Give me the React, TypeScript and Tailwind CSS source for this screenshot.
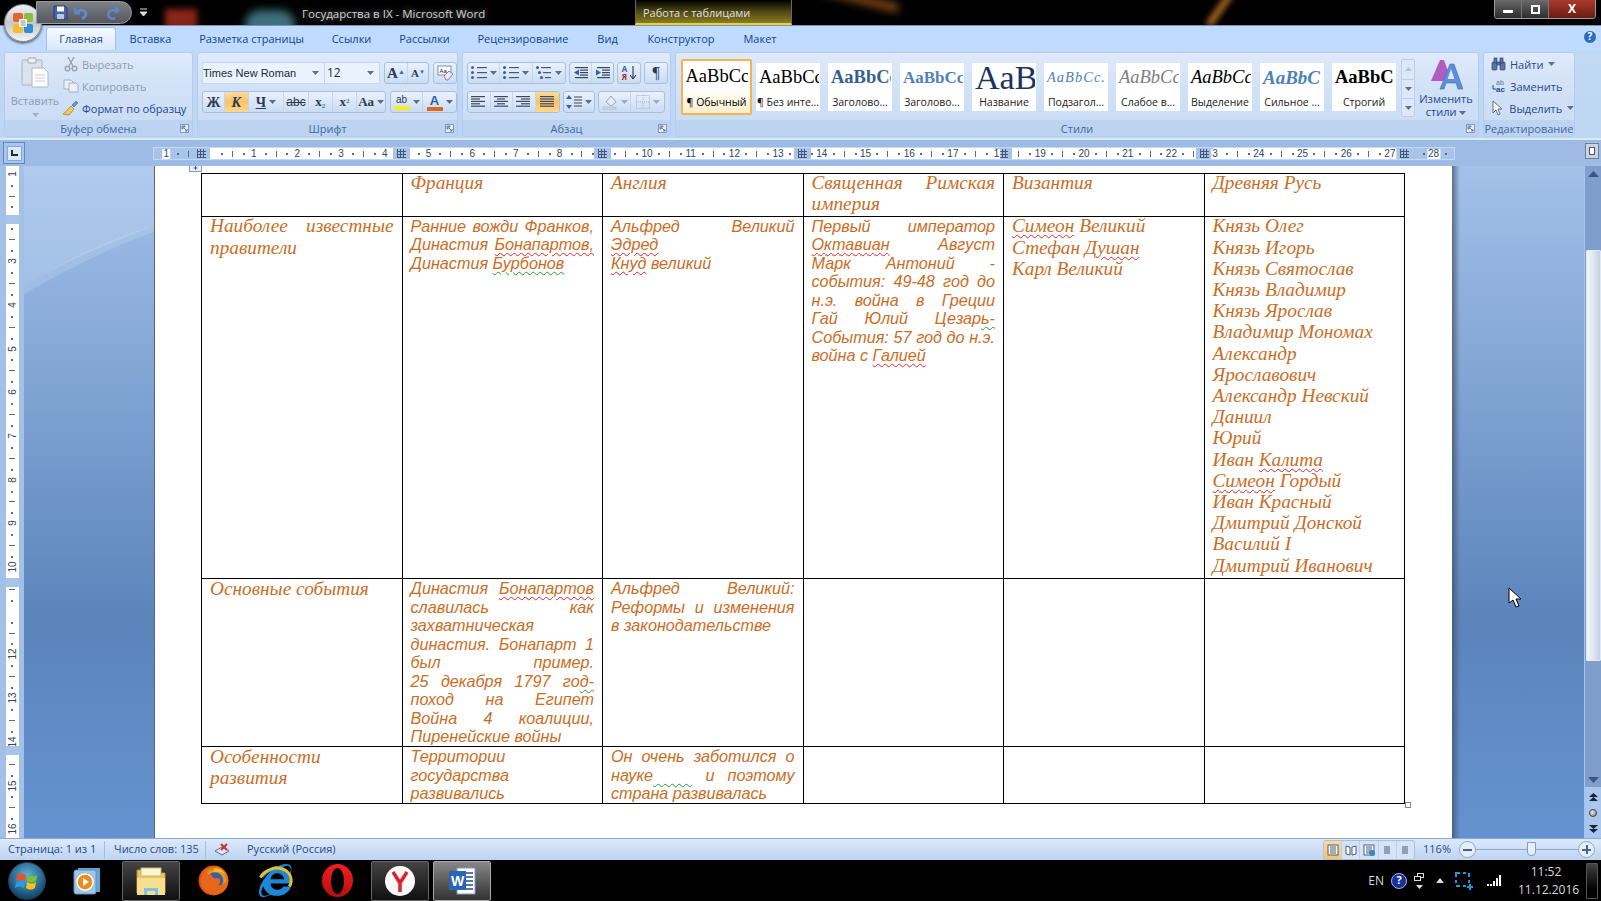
import type { ReactNode } from 'react'
import { FaInternetExplorer } from 'react-icons/fa'

const ui = "font-['Open_Sans','Noto_Sans',sans-serif]"

const tabs: [string, string][] = [
  ['Главная', 'w-[70px]'],
  ['Вставка', 'w-[69px]'],
  ['Разметка страницы', 'w-[133px]'],
  ['Ссылки', 'w-[67px]'],
  ['Рассылки', 'w-[79px]'],
  ['Рецензирование', 'w-[118px]'],
  ['Вид', 'w-[51px]'],
  ['Конструктор', 'w-[96px]'],
  ['Макет', 'w-[62px]'],
]

function Caret({ className = '' }: { className?: string }) {
  return (
    <svg width="7" height="4" viewBox="0 0 7 4" className={className}>
      <path d="M0 0h7L3.5 4z" fill="#5a6f8e" />
    </svg>
  )
}

function Launcher() {
  return (
    <svg width="9" height="9" viewBox="0 0 9 9">
      <rect x=".5" y=".5" width="8" height="8" fill="#e6eef9" stroke="#7f9bc0" />
      <path d="M2 2h3v1H3v2H2zM4 4l3 3M7 5v2H5" stroke="#44638f" fill="none" strokeWidth=".8" />
    </svg>
  )
}

function Group({ w, label, children }: { w: string; label: string; children: ReactNode }) {
  return (
    <div className={`${w} h-[85px] shrink-0 flex flex-col rounded-[3px] border border-[#b3cdee] bg-gradient-to-b from-[#dfeafb] via-[#d0e0f6] to-[#c8dbf5] overflow-hidden`}>
      <div className="h-[67px] flex-none">{children}</div>
      <div className="h-[17px] bg-[#bcd3f1] flex items-center relative">
        <span className="flex-1 text-center text-[11px] text-[#41699f] leading-none">{label}</span>
        <span className="absolute right-[3px] top-[4px]">
          {label !== 'Редактирование' && <Launcher />}
        </span>
      </div>
    </div>
  )
}

function Box({ w, children }: { w: string; children: ReactNode }) {
  return (
    <div className={`${w} h-[22px] flex items-center rounded-[3px] border border-[#a7c0de] bg-gradient-to-b from-[#e9f1fc] via-[#dae7f8] to-[#c9dcf4] divide-x divide-[#c4d6ec]`}>
      {children}
    </div>
  )
}

function Btn({ w, on, children }: { w: string; on?: boolean; children: ReactNode }) {
  return (
    <div className={`${w} h-full flex items-center justify-center gap-[3px] ${on ? 'bg-gradient-to-b from-[#fcdca0] via-[#fbc266] to-[#fcd98f]' : ''}`}>
      {children}
    </div>
  )
}

function Lines({ rows, color = '#3b4a5f' }: { rows: [number, number][]; color?: string }) {
  return (
    <svg width="15" height="13" viewBox="0 0 15 13">
      {rows.map(([x, w], i) => (
        <rect key={i} x={x} y={i * 2.4} width={w} height="1.2" fill={color} />
      ))}
    </svg>
  )
}

function ListIcon({ kind }: { kind: 'b' | 'n' | 'm' }) {
  const mark = kind === 'b' ? '#44629a' : '#2f5ea8'
  return (
    <svg width="16" height="14" viewBox="0 0 16 14">
      {[1, 6, 11].map((y, i) => (
        <g key={y}>
          <rect x={kind === 'm' ? i * 2 : 0} y={y - 1} width="3" height="3" rx="1.5" fill={mark} />
          <rect x={kind === 'm' ? i * 2 + 5 : 6} y={y} width={kind === 'm' ? 10 - i * 2 : 10} height="1.2" fill="#4b5a70" />
        </g>
      ))}
    </svg>
  )
}

function IndentIcon({ dir }: { dir: 'l' | 'r' }) {
  return (
    <svg width="16" height="14" viewBox="0 0 16 14">
      {[1, 3.5, 6, 8.5, 11].map(y => (
        <rect key={y} x={y > 3 && y < 9 ? 7 : 2} y={y} width={y > 3 && y < 9 ? 8 : 13} height="1.2" fill="#3a4658" />
      ))}
      <path d={dir === 'l' ? 'M6 3.5v6L1 6.5z' : 'M1 3.5v6l5-3z'} fill="#2f62b5" />
    </svg>
  )
}

function Mini({ icon, text, muted, caret }: { icon: ReactNode; text: string; muted?: boolean; caret?: boolean }) {
  return (
    <div className="h-[22px] flex items-center gap-[3px]">
      <span className="w-[17px] h-[17px] flex items-center justify-center">{icon}</span>
      <span className={`text-[11px] leading-none ${muted ? 'text-[#8c9cb2]' : 'text-[#1f4a8d]'}`}>{text}</span>
      {caret && <Caret className="ml-[2px]" />}
    </div>
  )
}

function Clipboard() {
  return (
    <Group w="w-[189px]" label="Буфер обмена">
      <div className="flex h-full">
        <div className="w-[60px] -mr-[5px] shrink-0 flex flex-col items-center pt-[4px]">
          <svg width="28" height="32" viewBox="0 0 28 32">
            <rect x="1" y="3" width="20" height="25" rx="1" fill="#dbe2ea" stroke="#aab6c6" />
            <rect x="7" y="1" width="8" height="5" rx="1" fill="#eef1f5" stroke="#9aa7b8" />
            <path d="M11 11h12l4 4v15H11z" fill="#fbfcfd" stroke="#b0bac7" />
            <path d="M14 18h10M14 21h10M14 24h10" stroke="#c8cfd9" />
          </svg>
          <span className="text-[11px] leading-none text-[#8c9cb2] mt-[6px]">Вставить</span>
          <Caret className="mt-[7px] opacity-40" />
        </div>
        <div className="flex flex-col pl-[2px]">
          <Mini
            muted
            text="Вырезать"
            icon={
              <svg width="14" height="16" viewBox="0 0 14 16" fill="none" stroke="#98a4b5" strokeWidth="1.4">
                <path d="M4 1l5 9M10 1L5 10" />
                <circle cx="3.5" cy="12.5" r="2.3" />
                <circle cx="10.5" cy="12.5" r="2.3" />
              </svg>
            }
          />
          <Mini
            muted
            text="Копировать"
            icon={
              <svg width="16" height="14" viewBox="0 0 16 14" fill="#eef2f7" stroke="#a3afbe">
                <path d="M1 1h7l2 2v7H1z" />
                <path d="M6 4h7l2 2v7H6z" />
              </svg>
            }
          />
          <Mini
            text="Формат по образцу"
            icon={
              <svg width="17" height="16" viewBox="0 0 17 16">
                <path d="M9 6l3 3-5 6-6-1c2-1 4-4 8-8z" fill="#f1c85a" stroke="#8a6a1e" strokeWidth=".6" />
                <path d="M10 5l4-4 2 2-4 4z" fill="#6d8fc7" stroke="#3b5a8f" strokeWidth=".5" />
              </svg>
            }
          />
        </div>
      </div>
    </Group>
  )
}

function FontGroup() {
  return (
    <Group w="w-[261px]" label="Шрифт">
      <div className="flex flex-col gap-[7px] pt-[9px] pl-[4px]">
        <div className="flex items-center">
          <div className="w-[123px] h-[22px] bg-[#eaf2fc] border border-[#c5d7ee] flex items-center justify-between pl-0 pr-[2px] text-[11px] text-[#1c2a3d] font-['Liberation_Sans',sans-serif]">
            Times New Roman
            <Caret className="mr-[3px]" />
          </div>
          <div className="w-[55px] h-[22px] bg-[#eaf2fc] border border-[#c5d7ee] border-l-0 flex items-center justify-between px-[2px] text-[12px] text-[#1c2a3d] mr-[4px]">
            12
            <Caret className="mr-[3px]" />
          </div>
          <Box w="w-[45px]">
            <Btn w="w-[24px]"><span className="font-['Liberation_Serif',serif] font-bold text-[15px] text-[#283a55]">A<sup className="text-[7px] text-[#3d6cb3]">▲</sup></span></Btn>
            <Btn w="w-[21px]"><span className="font-['Liberation_Serif',serif] font-bold text-[11px] text-[#283a55]">A<sup className="text-[6px] text-[#3d6cb3]">▼</sup></span></Btn>
          </Box>
          <div className="w-[4px]" />
          <Box w="w-[24px]">
            <Btn w="w-full">
              <svg width="17" height="17" viewBox="0 0 17 17">
                <rect x="1" y="1" width="13" height="9" fill="#fff" stroke="#7b8fac" />
                <text x="2.5" y="8" fontSize="6" fontFamily="Liberation Sans" fill="#223">Aa</text>
                <path d="M7 11l5-5 4 3-5 6H9z" fill="#f2e6f0" stroke="#8a7fa0" />
              </svg>
            </Btn>
          </Box>
        </div>
        <div className="flex items-center font-['Liberation_Serif',serif] text-[#2c3a50]">
          <Box w="w-[184px]">
            <Btn w="w-[22px]"><span className="font-bold text-[14px]">Ж</span></Btn>
            <Btn w="w-[24px]" on><span className="font-bold italic text-[14px]">К</span></Btn>
            <Btn w="w-[36px]"><span className="font-bold underline text-[14px]">Ч</span><Caret /></Btn>
            <Btn w="w-[25px]"><span className="line-through text-[12px] font-['Liberation_Sans',sans-serif]">abc</span></Btn>
            <Btn w="w-[24px]"><span className="font-bold text-[13px]">x<sub className="text-[7px] text-[#3d6cb3]">2</sub></span></Btn>
            <Btn w="w-[25px]"><span className="font-bold text-[13px]">x<sup className="text-[7px] text-[#3d6cb3]">2</sup></span></Btn>
            <Btn w="w-[28px]"><span className="text-[13px] font-semibold">Aa</span><Caret /></Btn>
          </Box>
          <div className="w-[4px]" />
          <Box w="w-[67px]">
            <Btn w="w-[33px]">
              <span className="flex flex-col items-center leading-none">
                <span className="text-[10px] font-['Liberation_Sans',sans-serif]">ab</span>
                <span className="w-[16px] h-[4px] bg-[#f6ee1d] mt-[1px]" />
              </span>
              <Caret />
            </Btn>
            <Btn w="w-[34px]">
              <span className="flex flex-col items-center leading-none">
                <span className="text-[13px] font-bold font-['Liberation_Sans',sans-serif] text-[#2f5da8]">A</span>
                <span className="w-[16px] h-[4px] bg-[#dd6a1a]" />
              </span>
              <Caret />
            </Btn>
          </Box>
        </div>
      </div>
    </Group>
  )
}

function Paragraph() {
  const left: [number, number][] = [[0, 14], [0, 9], [0, 14], [0, 9], [0, 14]]
  const center: [number, number][] = [[0, 14], [3, 8], [0, 14], [3, 8], [0, 14]]
  const right: [number, number][] = [[0, 14], [5, 9], [0, 14], [5, 9], [0, 14]]
  const full: [number, number][] = [[0, 14], [0, 14], [0, 14], [0, 14], [0, 14]]
  return (
    <Group w="w-[209px]" label="Абзац">
      <div className="flex flex-col gap-[7px] pt-[9px] pl-[4px]">
        <div className="flex gap-[3px]">
          <Box w="w-[99px]">
            <Btn w="w-[33px]"><ListIcon kind="b" /><Caret /></Btn>
            <Btn w="w-[33px]"><ListIcon kind="n" /><Caret /></Btn>
            <Btn w="w-[33px]"><ListIcon kind="m" /><Caret /></Btn>
          </Box>
          <Box w="w-[45px]">
            <Btn w="w-[23px]"><IndentIcon dir="l" /></Btn>
            <Btn w="w-[22px]"><IndentIcon dir="r" /></Btn>
          </Box>
          <Box w="w-[24px]">
            <Btn w="w-full">
              <span className="text-[8px] leading-[8px] font-bold text-center">
                <span className="block text-[#2f5da8]">A</span>
                <span className="block text-[#b0282c]">Я</span>
              </span>
              <svg width="6" height="14" viewBox="0 0 6 14"><path d="M3 0v12M0 9l3 4 3-4" stroke="#222" fill="none" /></svg>
            </Btn>
          </Box>
          <Box w="w-[24px]"><Btn w="w-full"><span className="text-[16px] font-['Liberation_Serif',serif] text-[#2a3a52] leading-none">¶</span></Btn></Box>
        </div>
        <div className="flex gap-[3px]">
          <Box w="w-[93px]">
            <Btn w="w-[23px]"><Lines rows={left} /></Btn>
            <Btn w="w-[23px]"><Lines rows={center} /></Btn>
            <Btn w="w-[23px]"><Lines rows={right} /></Btn>
            <Btn w="w-[24px]" on><Lines rows={full} /></Btn>
          </Box>
          <Box w="w-[32px]">
            <Btn w="w-full">
              <svg width="16" height="14" viewBox="0 0 16 14">
                <path d="M3 0l3 4H0zM3 14l3-4H0z" fill="#2f62b5" />
                <path d="M8 2h8M8 5h8M8 8h8M8 11h8" stroke="#3a4658" />
              </svg>
              <Caret />
            </Btn>
          </Box>
          <Box w="w-[67px]">
            <Btn w="w-[33px]">
              <svg width="16" height="15" viewBox="0 0 16 15">
                <path d="M4 7l5-6 5 6-5 4z" fill="#e9edf3" stroke="#9aa7b8" />
                <rect x="1" y="12" width="13" height="3" fill="#c6d4e6" stroke="#a5b4c7" strokeWidth=".5" />
              </svg>
              <Caret className="opacity-50" />
            </Btn>
            <Btn w="w-[34px]">
              <svg width="14" height="14" viewBox="0 0 14 14" fill="none" stroke="#aab6c6" strokeDasharray="1 1">
                <path d="M.5.5h13v13H.5zM7 0v14M0 7h14" />
              </svg>
              <Caret className="opacity-50" />
            </Btn>
          </Box>
        </div>
      </div>
    </Group>
  )
}

const gallery: [string, string, string][] = [
  ['AaBbCc', '¶ Без инте...', 'text-black text-[18.5px]'],
  ['AaBbCc', 'Заголово...', 'text-[#365f91] font-bold text-[18.5px]'],
  ['AaBbCc', 'Заголово...', 'text-[#4f81bd] font-bold text-[17px]'],
  ['AaB', 'Название', 'text-[#17365d] text-[34px] leading-[30px]'],
  ['AaBbCc.', 'Подзагол...', 'text-[#4f81bd] italic text-[14.5px] tracking-[1px]'],
  ['AaBbCc', 'Слабое в...', 'text-[#808080] italic text-[18.5px]'],
  ['AaBbCc', 'Выделение', 'text-black italic text-[18.5px]'],
  ['AaBbC', 'Сильное ...', 'text-[#4f81bd] italic font-bold text-[19px]'],
  ['AaBbC', 'Строгий', 'text-black font-bold text-[18.5px]'],
]

function Styles() {
  return (
    <Group w="w-[804px]" label="Стили">
      <div className="flex pt-[6px] pl-[5px]">
        <div className="w-[71px] h-[56px] mr-[4px] rounded-[2px] border-2 border-[#f1b552] bg-gradient-to-b from-white via-white to-[#fdeec9] flex flex-col items-center overflow-hidden">
          <span className="h-[32px] shrink-0 w-[62px] flex items-center overflow-hidden font-['Liberation_Serif',serif] text-[18.5px] text-black whitespace-nowrap">AaBbCc</span>
          <span className="h-[18px] flex items-center text-[10.5px] leading-none text-black whitespace-nowrap">¶ Обычный</span>
        </div>
        <div className="flex gap-[8px] pt-[4px]">
          {gallery.map(([sample, label, cls], i) => (
            <div key={i} className="w-[64px] h-[48px] bg-white flex flex-col items-center overflow-hidden">
              <span className={`h-[30px] shrink-0 w-[62px] pl-[2px] flex items-center overflow-hidden font-['Liberation_Serif',serif] whitespace-nowrap ${cls}`}>{sample}</span>
              <span className="h-[18px] flex items-center text-[10.5px] leading-none text-[#222] whitespace-nowrap">{label}</span>
            </div>
          ))}
        </div>
        <div className="ml-[5px] w-[14px] h-[58px] flex flex-col rounded-[2px] border border-[#bcd0ea] divide-y divide-[#bcd0ea] bg-[#dce8f8]">
          <span className="h-[20px] flex items-center justify-center"><Caret className="rotate-180 opacity-30" /></span>
          <span className="h-[20px] flex items-center justify-center"><Caret /></span>
          <span className="h-[17px] flex items-center justify-center"><Caret /></span>
        </div>
        <div className="ml-[3px] w-[56px] flex flex-col items-center">
          <svg width="34" height="32" viewBox="0 0 34 32">
            <path d="M2 22L11 1h4l5 14-3 7z" fill="#b05cc0" />
            <path d="M11 30L21 5h4l9 25h-5l-2-6H17l-2 6z" fill="#5c8fd6" stroke="#3f6fb5" strokeWidth=".6" />
            <path d="M18.5 20h7L22 10z" fill="#dbe8f8" />
          </svg>
          <span className="text-[11px] leading-[13px] text-[#1f4a8d] text-center mt-[1px]">Изменить<br />стили <Caret className="inline" /></span>
        </div>
      </div>
    </Group>
  )
}

function Editing() {
  return (
    <Group w="w-[92px]" label="Редактирование">
      <div className="flex flex-col pl-[6px]">
        <Mini
          caret
          text="Найти"
          icon={
            <svg width="15" height="14" viewBox="0 0 15 14" fill="#5876a8" stroke="#2f4468" strokeWidth=".7">
              <rect x="1" y="5" width="5" height="8" rx="1" />
              <rect x="9" y="5" width="5" height="8" rx="1" />
              <rect x="3" y="1" width="3" height="5" />
              <rect x="9" y="1" width="3" height="5" />
              <rect x="6" y="5" width="3" height="3" />
            </svg>
          }
        />
        <Mini
          text="Заменить"
          icon={
            <svg width="15" height="15" viewBox="0 0 15 15">
              <text x="5" y="6" fontSize="7" fontFamily="Liberation Sans" fill="#5a6f8e">ab</text>
              <text x="5" y="13" fontSize="8" fontWeight="bold" fontFamily="Liberation Sans" fill="#1f4a8d">ac</text>
              <path d="M2 6v4h3" stroke="#1f4a8d" fill="none" />
            </svg>
          }
        />
        <Mini
          caret
          text="Выделить"
          icon={
            <svg width="12" height="16" viewBox="0 0 12 16">
              <path d="M1 1v12l3-3 2 5 2-1-2-5h4z" fill="#fff" stroke="#5a6f8e" />
            </svg>
          }
        />
      </div>
    </Group>
  )
}

const hNums: [number, string][] = [
  [-1, '1'], [1, '1'], [2, '2'], [3, '3'], [4, '4'], [5, '5'], [6, '6'], [7, '7'], [8, '8'], [10, '10'], [11, '11'], [12, '12'],
  [13, '13'], [14, '14'], [15, '15'], [16, '16'], [17, '17'], [18, '1'], [19, '19'], [20, '20'], [21, '21'], [22, '22'], [23, '3'],
  [24, '24'], [25, '25'], [26, '26'], [27, '27'], [28, '28'],
]
const hMarks = [201, 401, 602, 802, 1003, 1204, 1404]
const rulerX = (n: number) => 209 + 43.7 * n - 153
const ticks = Array.from({ length: 31 }, (_, i) => i - 1)

function HRuler() {
  return (
    <div className="relative mt-[7px] ml-[153px] w-[1302px] h-[13px] bg-white border border-[#c5d8f1] text-[10px] leading-none text-[#33445e] font-['Liberation_Sans',sans-serif] overflow-hidden">
      <div className="absolute left-0 top-0 w-[48px] h-full bg-[#a9c4e9]" />
      <div className="absolute right-0 top-0 w-[50px] h-full bg-[#a9c4e9]" />
      {ticks.map(n => (
        <span key={n}>
          <span className="absolute top-[5px] w-[2px] h-[2px] bg-[#5a6a80]" style={{ left: rulerX(n + 0.25) }} />
          <span className="absolute top-[3px] w-px h-[6px] bg-[#5a6a80]" style={{ left: rulerX(n + 0.5) }} />
          <span className="absolute top-[5px] w-[2px] h-[2px] bg-[#5a6a80]" style={{ left: rulerX(n + 0.75) }} />
        </span>
      ))}
      {hMarks.map(x => (
        <span key={x} className="absolute top-0 h-full w-[17px] bg-[#a9c4e9] flex items-center justify-center" style={{ left: x - 162 }}>
          <span className="w-[9px] h-[9px] bg-[repeating-linear-gradient(90deg,#44577a_0_1px,transparent_1px_3px),repeating-linear-gradient(0deg,#44577a_0_1px,transparent_1px_3px)]" />
        </span>
      ))}
      {hNums.map(([n, t]) => (
        <span key={n} className="absolute top-[1px] -translate-x-1/2 bg-white px-[1px]" style={{ left: rulerX(n) }}>{t}</span>
      ))}
    </div>
  )
}

const vNums = Array.from({ length: 16 }, (_, i) => i + 1).filter(n => n !== 2 && n !== 11)
const vMarks = [215, 578, 746]
const rulerY = (n: number) => 130 + 43.7 * n - 166

function VRuler() {
  return (
    <div className="relative w-[24px] h-full shrink-0 bg-[#a3c0e7]">
      <div className="absolute left-[6px] top-0 w-[13px] h-full bg-white text-[10px] leading-none text-[#33445e] font-['Liberation_Sans',sans-serif] overflow-hidden">
        {Array.from({ length: 17 }, (_, n) => n).map(n => (
          <span key={n}>
            <span className="absolute left-[5px] w-[2px] h-[2px] bg-[#5a6a80]" style={{ top: rulerY(n + 0.25) }} />
            <span className="absolute left-[3px] w-[6px] h-px bg-[#5a6a80]" style={{ top: rulerY(n + 0.5) }} />
            <span className="absolute left-[5px] w-[2px] h-[2px] bg-[#5a6a80]" style={{ top: rulerY(n + 0.75) }} />
          </span>
        ))}
        {vNums.map(n => (
          <span key={n} className="absolute left-0 w-[13px] text-center -rotate-90 bg-white" style={{ top: rulerY(n) - 5 }}>{n}</span>
        ))}
        {vMarks.map(y => (
          <span key={y} className="absolute left-0 w-full h-[9px] bg-[#a9c4e9]" style={{ top: y - 166 }} />
        ))}
      </div>
    </div>
  )
}

const times = "font-['Liberation_Serif',serif] text-[19.3px] leading-[21.2px]"
const arial = "font-['Liberation_Sans',sans-serif] text-[16.2px] leading-[18.5px]"

function L({ j, children }: { j?: boolean; children: ReactNode }) {
  return <div className={j ? '[text-align-last:justify]' : ''}>{children}</div>
}
function R({ children }: { children: ReactNode }) {
  return <span className="underline decoration-wavy decoration-[#e0262b] decoration-1 underline-offset-[2px]">{children}</span>
}
function G({ children }: { children: ReactNode }) {
  return <span className="underline decoration-wavy decoration-[#2c9a3a] decoration-1 underline-offset-[2px]">{children}</span>
}
function Cell({ font, children }: { font: string; children?: ReactNode }) {
  return (
    <td className={`border border-black align-top px-[8px] py-0 ${font}`}>
      <div className={font === times ? 'relative -top-[1.5px]' : ''}>{children}</div>
    </td>
  )
}

function DocTable() {
  return (
    <table className="table-fixed border-collapse w-[1204px] ml-[46px] text-[#cb6d1f] italic">
      <tbody>
        <tr className="h-[43px]">
          <Cell font={times} />
          <Cell font={times}>Франция</Cell>
          <Cell font={times}>Англия</Cell>
          <Cell font={times}><L j>Священная Римская</L><L>империя</L></Cell>
          <Cell font={times}>Византия</Cell>
          <Cell font={times}>Древняя Русь</Cell>
        </tr>
        <tr className="h-[362.5px]">
          <Cell font={times}><L j>Наиболее известные</L><L>правители</L></Cell>
          <Cell font={arial}>
            <L j>Ранние вожди Франков,</L>
            <L j>Династия <R>Бонапартов,</R></L>
            <L>Династия <G>Бурбонов</G></L>
          </Cell>
          <Cell font={arial}>
            <L j>Альфред Великий</L>
            <L><R>Эдред</R></L>
            <L><R>Кнуд</R> великий</L>
          </Cell>
          <Cell font={arial}>
            <L j>Первый император</L>
            <L j><R>Октавиан</R> Август</L>
            <L j>Марк Антоний -</L>
            <L j>события: 49-48 год до</L>
            <L j>н.э. война в Греции</L>
            <L j>Гай Юлий Цезар<G>ь-</G></L>
            <L j>События: 57 год до н.э.</L>
            <L>война с <R>Галией</R></L>
          </Cell>
          <Cell font={times}>
            <L><R>Симеон</R> Великий</L>
            <L>Стефан <R>Душан</R></L>
            <L>Карл Великий</L>
          </Cell>
          <Cell font={times}>
            <L>Князь Олег</L>
            <L>Князь Игорь</L>
            <L>Князь Святослав</L>
            <L>Князь Владимир</L>
            <L>Князь Ярослав</L>
            <L>Владимир Мономах</L>
            <L>Александр</L>
            <L>Ярославович</L>
            <L>Александр Невский</L>
            <L>Даниил</L>
            <L>Юрий</L>
            <L>Иван <R>Калита</R></L>
            <L><R>Симеон</R> Гордый</L>
            <L>Иван Красный</L>
            <L>Дмитрий Донской</L>
            <L>Василий I</L>
            <L>Дмитрий Иванович</L>
          </Cell>
        </tr>
        <tr className="h-[168px]">
          <Cell font={times}>Основные события</Cell>
          <Cell font={arial}>
            <L j>Династия <R>Бонапартов</R></L>
            <L j>славилась как</L>
            <L>захватническая</L>
            <L j>династия. Бонапарт 1</L>
            <L j>был пример.</L>
            <L j>25 декабря 1797 го<G>д-</G></L>
            <L j>поход на Египет</L>
            <L j>Война 4 коалиции,</L>
            <L>Пиренейские войны</L>
          </Cell>
          <Cell font={arial}>
            <L j>Альфред Великий:</L>
            <L j>Реформы и изменения</L>
            <L>в законодательстве</L>
          </Cell>
          <Cell font={times} />
          <Cell font={times} />
          <Cell font={times} />
        </tr>
        <tr className="h-[56px]">
          <Cell font={times}><L>Особенности</L><L>развития</L></Cell>
          <Cell font={arial}>
            <L>Территории</L>
            <L>государства</L>
            <L>развивались</L>
          </Cell>
          <Cell font={arial}>
            <L j>Он очень заботился о</L>
            <L j>науке<G>{'\u00a0\u00a0\u00a0'}</G> и поэтому</L>
            <L>страна развивалась</L>
          </Cell>
          <Cell font={times} />
          <Cell font={times} />
          <Cell font={times} />
        </tr>
      </tbody>
    </table>
  )
}

function Scrollbar() {
  return (
    <div className="w-[17px] shrink-0 h-full flex flex-col items-center bg-[#7f9ecb] border-l border-[#a9c4e9]">
      <div className="h-[16px] w-full flex items-center justify-center bg-[#7f9ecb]">
        <svg width="11" height="7" viewBox="0 0 11 7"><path d="M0 6h11L5.5 0z" fill="#3d5585" /></svg>
      </div>
      <div className="h-[68px]" />
      <div className="h-[411px] w-[15px] shrink-0 rounded-[1px] border border-[#dfe9f6] bg-gradient-to-r from-[#f1f5fb] via-[#dfe7f2] to-[#c3d0e2]" />
      <div className="flex-1" />
      <div className="h-[16px] w-full flex items-center justify-center">
        <svg width="11" height="7" viewBox="0 0 11 7"><path d="M0 1h11L5.5 7z" fill="#3d5585" /></svg>
      </div>
      <div className="h-[51px] w-full bg-[#a9c6ee] flex flex-col items-center justify-around py-[2px]">
        <svg width="9" height="9" viewBox="0 0 9 9"><path d="M0 4h9L4.5 0zM0 8h9L4.5 4z" fill="#1b2438" /></svg>
        <span className="w-[8px] h-[8px] rounded-full bg-[radial-gradient(circle_at_35%_35%,#eee,#777)] border border-[#444]" />
        <svg width="9" height="9" viewBox="0 0 9 9"><path d="M0 1h9L4.5 5zM0 5h9L4.5 9z" fill="#1b2438" /></svg>
      </div>
    </div>
  )
}

function StatusBar() {
  return (
    <div className={`h-[22px] flex items-center justify-between border-t border-[#8eabd3] bg-gradient-to-b from-[#dce9fb] to-[#bed4f0] text-[11px] text-[#1f4a8d] whitespace-nowrap ${ui}`}>
      <div className="flex h-full items-center divide-x divide-[#a4bedf]">
        <span className="w-[105px] pl-[8px]">Страница: 1 из 1</span>
        <span className="w-[101px] pl-[9px]">Число слов: 135</span>
        <span className="w-[148px] flex items-center pl-[8px] gap-[17px] h-full">
          <svg width="16" height="14" viewBox="0 0 16 14">
            <path d="M1 8l7-4 7 4-7 4z" fill="#dfeaf7" stroke="#4d6c9d" />
            <path d="M7 1l6 6M13 1L7 7" stroke="#d92d20" strokeWidth="2" />
          </svg>
          Русский (Россия)
        </span>
      </div>
      <div className="flex items-center h-full">
        <div className="w-[92px] h-[20px] flex items-center rounded-[3px] border border-[#a7c0de] bg-[#d4e3f7] divide-x divide-[#bcd0ea] overflow-hidden">
          {['a', 'b', 'c', 'd', 'e'].map(k => (
            <span key={k} className={`flex-1 h-full flex items-center justify-center ${k === 'a' ? 'bg-gradient-to-b from-[#fcdca0] to-[#fbc266]' : ''}`}>
              <svg width="12" height="12" viewBox="0 0 12 12">
                {k === 'b' ? (
                  <path d="M1 2l4 1v8l-4-1zM11 2L7 3v8l4-1z" fill="#fff" stroke="#4d5d74" />
                ) : (
                  <>
                    <rect x="1" y="1" width="10" height="10" fill={k === 'a' || k === 'c' ? '#fff' : 'none'} stroke={k === 'a' || k === 'c' ? '#4d5d74' : 'none'} />
                    <path d="M3 3h6M3 5h6M3 7h6M3 9h6" stroke="#4d5d74" />
                    {k === 'c' && <circle cx="9" cy="9" r="3" fill="#2e8cc4" />}
                  </>
                )}
              </svg>
            </span>
          ))}
        </div>
        <span className="w-[44px] text-center text-[#1f4a8d]">116%</span>
        <span className="w-[17px] h-[17px] rounded-full border border-[#8da7c9] bg-[#e6eefa] flex items-center justify-center"><span className="w-[9px] h-[2px] bg-[#47638f]" /></span>
        <div className="relative w-[102px] h-px bg-[#8da7c9]">
          <span className="absolute left-[51px] -top-[7px] w-[9px] h-[14px] bg-[#e6eefa] border border-[#7f9bc0] rounded-b-[4px]" />
        </div>
        <span className="relative w-[17px] h-[17px] rounded-full border border-[#8da7c9] bg-[#e6eefa] flex items-center justify-center mr-[6px]">
          <span className="w-[9px] h-[2px] bg-[#47638f]" />
          <span className="absolute w-[2px] h-[9px] bg-[#47638f]" />
        </span>
      </div>
    </div>
  )
}

function Pinned({ box, active, children }: { box?: boolean; active?: boolean; children: ReactNode }) {
  return (
    <div className={`w-[58px] h-[40px] flex items-center justify-center mr-[4px] rounded-[2px] ${box ? 'border border-[#666] bg-gradient-to-b from-[#444] to-[#111]' : ''} ${active ? 'bg-gradient-to-b from-[#888] to-[#333] border-[#aaa]' : ''}`}>
      {children}
    </div>
  )
}

function Taskbar() {
  return (
    <div className={`h-[41px] bg-black flex items-center justify-between ${ui}`}>
      <div className="flex items-center">
        <div className="w-[46px] ml-[8px] mr-[3px] h-[40px] flex items-center">
          <svg width="38" height="38" viewBox="0 0 38 38">
            <defs>
              <radialGradient id="orb" cx="50%" cy="35%" r="65%">
                <stop offset="0" stopColor="#5fb2dd" />
                <stop offset="1" stopColor="#0c3d63" />
              </radialGradient>
            </defs>
            <circle cx="19" cy="19" r="18.5" fill="url(#orb)" stroke="#283d50" />
            <path d="M9 13c3-2 6-2 9 0l-1 6c-3-2-6-2-9 0z" fill="#e8542a" />
            <path d="M20 13c3 2 6 2 9 0l-1 6c-3 2-6 2-9 0z" fill="#7cc22c" />
            <path d="M8 20c3-2 6-2 9 0l-1 6c-3-2-6-2-9 0z" fill="#2f9ae0" />
            <path d="M19 20c3 2 6 2 9 0l-1 6c-3 2-6 2-9 0z" fill="#f6c21c" />
          </svg>
        </div>
        <div className="w-[60px] flex items-center justify-center mr-[5px]">
          <svg width="28" height="28" viewBox="0 0 28 28">
            <rect x="5" y="1" width="22" height="24" fill="#6aa2cc" />
            <rect x="1" y="3" width="22" height="24" rx="2" fill="#9fc7e3" stroke="#5c93bf" />
            <circle cx="12" cy="15" r="8" fill="#f08a1a" stroke="#fff" strokeWidth="1.5" />
            <path d="M10 11l6 4-6 4z" fill="#fff" />
          </svg>
        </div>
        <Pinned box>
          <svg width="32" height="30" viewBox="0 0 32 30">
            <path d="M2 4h10l2 3h16v20H2z" fill="#e9c862" stroke="#b7953a" />
            <rect x="6" y="2" width="20" height="8" fill="#fdf6d6" stroke="#cbb26a" />
            <rect x="2" y="12" width="28" height="17" fill="#f7df8d" />
            <path d="M9 22h14v7h-3v-4h-8v4H9z" fill="#7fc1e8" />
          </svg>
        </Pinned>
        <div className="w-[58px] flex justify-center mr-[4px]">
          <svg width="31" height="31" viewBox="0 0 31 31">
            <defs>
              <radialGradient id="ff" cx="55%" cy="50%" r="55%">
                <stop offset="0.45" stopColor="#3a5ea8" />
                <stop offset="0.55" stopColor="#f0a020" />
                <stop offset="1" stopColor="#db3d10" />
              </radialGradient>
            </defs>
            <circle cx="15.5" cy="15.5" r="15" fill="url(#ff)" />
            <path d="M7 4c-5 8-4 20 8 25 8 1 14-6 14-14-2 4-6 6-9 5 3-1 3-6 0-7-3 1-6 0-6-3-3 0-6-2-7-6z" fill="#e8661a" />
            <path d="M16 3c5 0 9 2 12 7-3-3-7-4-12-3z" fill="#f6c21c" />
          </svg>
        </div>
        <div className="w-[58px] flex justify-center mr-[4px] relative">
          <FaInternetExplorer className="text-[#1e88d8] w-[33px] h-[33px]" />
          <span className="absolute left-[11px] top-[3px] w-[36px] h-[30px] rounded-[50%] border-[3px] border-transparent border-t-[#e8c12a] border-r-[#e8c12a] -rotate-[20deg]" />
        </div>
        <div className="w-[58px] flex justify-center mr-[5px]">
          <span className="w-[31px] h-[33px] rounded-[50%] bg-gradient-to-b from-[#f0201f] to-[#b80d10] flex items-center justify-center">
            <span className="w-[13px] h-[26px] rounded-[50%] bg-black" />
          </span>
        </div>
        <Pinned box>
          <svg width="30" height="30" viewBox="0 0 30 30">
            <circle cx="15" cy="15" r="15" fill="#fff" />
            <path d="M8 6l7 11 7-11M15 16v10" stroke="#e31e24" strokeWidth="3.5" fill="none" />
          </svg>
        </Pinned>
        <Pinned box active>
          <svg width="32" height="32" viewBox="0 0 32 32">
            <rect x="11" y="3" width="18" height="26" fill="#fff" stroke="#7d99c2" />
            <path d="M20 8h7M20 12h7M20 16h7M14 20h13M14 24h13" stroke="#1f4e93" strokeWidth="1.5" />
            <rect x="3" y="6" width="17" height="19" fill="#2a64b4" />
            <text x="5" y="21" fontSize="14" fontWeight="bold" fontFamily="Liberation Sans" fill="#fff">W</text>
          </svg>
        </Pinned>
      </div>
      <div className="flex items-center text-[#d9d9d9]">
        <span className="text-[12px] mr-[7px]">EN</span>
        <span className="w-[16px] h-[16px] rounded-full bg-[#1a2f9a] border border-[#9fb5ea] text-white text-[11px] font-bold flex items-center justify-center mr-[5px]">?</span>
        <span className="w-[14px] flex flex-col items-center gap-[4px] mr-[10px]">
          <svg width="10" height="8" viewBox="0 0 10 8" fill="none" stroke="#ddd"><rect x="3.5" y=".5" width="6" height="4" /><rect x=".5" y="3.5" width="6" height="4" fill="#000" /></svg>
          <svg width="7" height="4" viewBox="0 0 7 4"><path d="M0 0h7L3.5 4z" fill="#ddd" /></svg>
        </span>
        <svg width="8" height="5" viewBox="0 0 8 5" className="mr-[11px]"><path d="M0 5h8L4 0z" fill="#ddd" /></svg>
        <svg width="18" height="18" viewBox="0 0 18 18" className="mr-[14px]" fill="none" stroke="#1e9ad6" strokeWidth="2">
          <path d="M1 5V1h4M8 1h3M14 1v4M14 8v3M1 8v3M1 14h4M8 14h3" />
          <path d="M15 12v6M12 15h6" />
        </svg>
        <span className="flex items-end gap-[1px] h-[11px] mr-[17px]">
          <span className="w-[2px] h-[2px] bg-white" />
          <span className="w-[2px] h-[2px] bg-white" />
          <span className="w-[2px] h-[5px] bg-white" />
          <span className="w-[2px] h-[8px] bg-white" />
          <span className="w-[2px] h-[11px] bg-white" />
        </span>
        <span className="text-[12px] leading-[18px] text-center w-[56px] mr-[12px] whitespace-nowrap">11:52<br />11.12.2016</span>
        <span className="w-[12px] h-[36px] border border-[#555] bg-gradient-to-b from-[#444] to-black rounded-[1px] mr-[3px]" />
      </div>
    </div>
  )
}

export default function App() {
  return (
    <div className={`relative w-[1601px] h-[901px] overflow-hidden flex flex-col bg-black ${ui}`}>
      {/* title bar */}
      <div className="relative h-[25px] shrink-0 flex items-center bg-black overflow-hidden">
        <div className="absolute left-[165px] top-[9px] w-[32px] h-[20px] bg-[#8a2418] blur-[3px]" />
        <div className="absolute left-[245px] top-[10px] w-[50px] h-[30px] rounded-full bg-[#3d6f7c] blur-[4px]" />
        <div className="absolute left-[780px] -top-[10px] w-[120px] h-[8px] rotate-[14deg] bg-[#8a4a18] blur-[4px]" />
        <div className="absolute left-[1200px] top-[6px] w-[40px] h-[6px] -rotate-[55deg] bg-[#c47a28] blur-[3px]" />
        <div className="ml-[36px] w-[96px] h-[23px] rounded-r-full bg-gradient-to-b from-[#7d8084] to-[#54575b] border border-[#9a9da1] flex items-center z-10 pl-[16px] gap-[5px]">
          <svg width="15" height="15" viewBox="0 0 15 15">
            <path d="M1 1h11l2 2v11H1z" fill="#4466ad" stroke="#223d78" />
            <rect x="4" y="1.5" width="7" height="5" fill="#fff" />
            <rect x="4" y="9" width="7" height="5" fill="#b9c4da" />
          </svg>
          <svg width="16" height="14" viewBox="0 0 16 14" fill="none" stroke="#5b87d4" strokeWidth="2.6"><path d="M2 2v5h5M3 7c2-4 9-4 10 1 0 2-2 4-4 5" /></svg>
          <Caret className="opacity-70" />
          <svg width="15" height="14" viewBox="0 0 16 14" fill="none" stroke="#5b87d4" strokeWidth="2.6"><path d="M10 1l3 3-3 3M13 4H7a4.500 4.500 0 100 9h3" /></svg>
        </div>
        <svg width="9" height="9" viewBox="0 0 9 9" className="ml-[7px] z-10"><path d="M1 1h7M1 4h7L4.500 8z" stroke="#ddd" fill="#ddd" /></svg>
        <div className="ml-[154px] w-[187px] mt-[3px] z-10 text-[11.5px] leading-none text-[#cfcfcf] whitespace-nowrap [text-shadow:0_0_6px_#888]">Государства в IX - Microsoft Word</div>
        <div className="ml-[146px] w-[157px] h-[25px] z-10 bg-gradient-to-b from-transparent via-[#4d4716] to-[#8c7e20] border-x border-[#6d6a4a] border-b-2 border-b-[#e8d040] flex items-center pl-[7px] pt-[4px] text-[11px] text-[#e0e0e0] whitespace-nowrap">Работа с таблицами</div>
        <div className="flex-1" />
        <div className="flex h-[19px] self-start mr-[5px] w-[102px] rounded-b-[4px] border border-t-0 border-[#9a9a9a] overflow-hidden z-10">
          <span className="w-[26px] flex items-center justify-center bg-gradient-to-b from-[#6a6a6a] to-[#2d2d2d]"><span className="w-[10px] h-[3px] bg-white mt-[4px]" /></span>
          <span className="w-[28px] flex items-center justify-center bg-gradient-to-b from-[#6a6a6a] to-[#2d2d2d] border-x border-[#777]"><span className="w-[9px] h-[9px] border-2 border-white" /></span>
          <span className="flex-1 flex items-center justify-center bg-gradient-to-b from-[#a83a2c] to-[#6b1c12] text-white text-[12px] font-bold">X</span>
        </div>
      </div>

      {/* tabs */}
      <div className="h-[25px] shrink-0 flex items-end bg-[#bfdbff] pl-[46px] border-t border-[#7d93b0] text-[11px] text-[#15428b]">
        {tabs.map(([t, w], i) => (
          <div
            key={t}
            className={`${w} h-[23px] pt-[1px] flex items-center justify-center whitespace-nowrap ${i === 0 ? 'rounded-t-[3px] border border-b-0 border-[#a5c2e6] bg-gradient-to-b from-[#f6faff] to-[#d9e7fa]' : ''}`}
          >
            {t}
          </div>
        ))}
        <div className="flex-1 self-center flex justify-end pr-[4px] mb-[3px]">
          <span className="w-[14px] h-[14px] rounded-full bg-[#2a6ec4] border border-[#cfe0f5] text-white text-[10px] font-bold flex items-center justify-center">?</span>
        </div>
      </div>

      {/* ribbon */}
      <div className="h-[90px] shrink-0 flex gap-[4px] pl-[4px] pt-[2px] bg-gradient-to-b from-[#c2d9f6] to-[#bfd6f3] border-b-2 border-[#dbe8f8]">
        <Clipboard />
        <FontGroup />
        <Paragraph />
        <Styles />
        <Editing />
      </div>

      {/* horizontal ruler */}
      <div className="relative h-[26px] shrink-0 bg-[#9dbbe4]">
        <HRuler />
        <div className="absolute left-[3px] top-[2px] w-[22px] h-[22px] border border-[#5f86c4] bg-[#a9c6ee] flex items-center justify-center">
          <span className="w-[15px] h-[15px] bg-[#dfe9f6] border border-[#8da7c9] flex items-center justify-center">
            <span className="w-[7px] h-[6px] border-l-2 border-b-2 border-[#1d2b40]" />
          </span>
        </div>
        <div className="absolute right-[2px] top-[3px] w-[14px] h-[16px] bg-[#c9d4e4] border border-[#6e7f98] flex items-center justify-center">
          <span className="w-[6px] h-[8px] bg-white border border-[#555]" />
        </div>
      </div>

      {/* document */}
      <div className="relative h-[672px] shrink-0 flex bg-gradient-to-b from-[#a3c1e9] via-[#5b84bb] via-[68%] to-[#6592d0]">
        <VRuler />
        <div className="relative w-[130px] shrink-0 overflow-hidden">
          <svg className="absolute inset-0 w-full h-full" viewBox="0 0 130 672" preserveAspectRatio="none">
            <path d="M0 0h130v60C90 75 40 95 0 120z" fill="#c6dcf6" opacity=".35" />
            <path d="M0 120c40-25 90-50 130-60v6C90 80 40 105 0 128z" fill="#dceafb" opacity=".2" />
          </svg>
        </div>
        <div className="relative w-[1298px] shrink-0 bg-white border-l border-[#5b6675] overflow-hidden pt-[6.500px]">
          <DocTable />
          <svg className="absolute left-[34px] top-0" width="13" height="6" viewBox="0 0 13 6">
            <rect x=".5" y="-1" width="12" height="6.500" fill="#eef2f8" stroke="#8f9db3" />
            <path d="M6.500 0v4M4.500 2h4" stroke="#3d5fa8" />
          </svg>
          <div className="absolute left-[1250px] top-[636px] w-[6px] h-[6px] bg-white border border-[#888]" />
        </div>
        <div className="w-[8px] shrink-0 bg-gradient-to-r from-[#3e4d63]/70 to-transparent" />
        <div className="flex-1" />
        <Scrollbar />
      </div>

      <StatusBar />
      <Taskbar />

      {/* office button */}
      <div className="absolute left-[4px] top-[4px] w-[38px] h-[38px] rounded-full border border-[#8a8d92] bg-gradient-to-b from-[#eef0f3] via-[#c3c8ce] to-[#f2f4f7] flex items-center justify-center shadow-[0_1px_3px_#333]">
        <svg width="24" height="24" viewBox="0 0 24 24">
          <rect x="2" y="2" width="10" height="9" rx="2" fill="#e8632a" />
          <rect x="13" y="2" width="9" height="9" rx="2" fill="#8dbd3a" />
          <rect x="2" y="13" width="10" height="9" rx="2" fill="#f6bd2a" />
          <rect x="13" y="13" width="9" height="9" rx="2" fill="#2f8fd6" />
          <rect x="8" y="8" width="8" height="8" rx="1" fill="#fff" />
          <path d="M9.500 10h5M9.500 12h5M9.500 14h5" stroke="#888" />
        </svg>
      </div>

      {/* mouse pointer */}
      <svg className="absolute left-[1508px] top-[587px]" width="14" height="21" viewBox="0 0 14 21">
        <path d="M1 1v15l4-3 3 7 3-1-3-7h5z" fill="#fff" stroke="#000" />
      </svg>
    </div>
  )
}
